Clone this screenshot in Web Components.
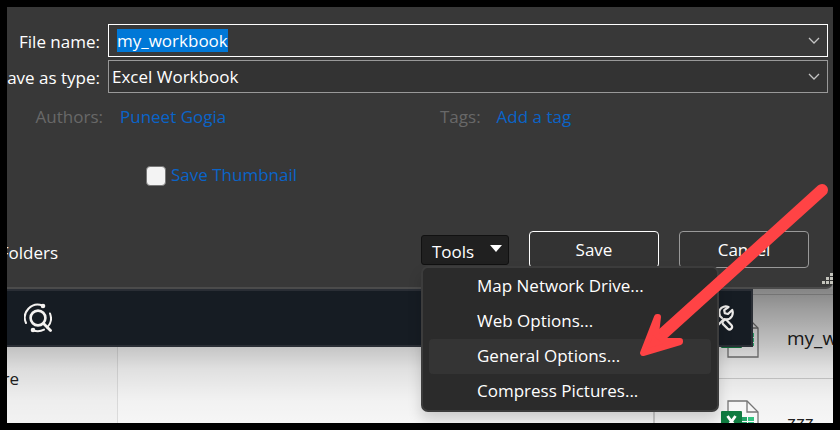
<!DOCTYPE html>
<html lang="en">
<head>
<meta charset="utf-8">
<title>Save As</title>
<style>
html { height: 100%; }
body { margin: 0; min-height: 100%; display: flex; background: #000; font-family: "Open Sans", "Noto Sans", sans-serif; font-size: 17px; line-height: 24px; color: #fff; }
</style>
</head>
<body>
<desktop-frame>
  <save-dialog slot="dialog"></save-dialog>
  <dark-toolbar slot="toolbar"></dark-toolbar>
  <file-explorer slot="explorer">
    <file-row name="my_workbook"></file-row>
    <file-row name="zzz"></file-row>
  </file-explorer>
  <pointer-arrow slot="overlay"></pointer-arrow>
</desktop-frame>
<script>
const define = (tag, html, setup) => customElements.define(tag, class extends HTMLElement {
  constructor() {
    super();
    const t = document.createElement('template');
    t.innerHTML = html;
    this.attachShadow({ mode: 'open' }).append(t.content.cloneNode(true));
  }
  connectedCallback() { if (setup) setup(this, this.shadowRoot); }
});

define('desktop-frame', `
<style>
:host { flex: 1; display: flex; box-sizing: border-box; border: 7px solid #000; min-width: 0; }
.stage { position: relative; flex: 1; min-width: 0; display: flex; flex-direction: column; overflow: hidden; background: #8c8c8c; }
.top { position: relative; z-index: 3; }
.lower { position: relative; z-index: 1; flex: 1 1 0; min-height: 0; display: flex; }
.shade { position: absolute; inset: 0; z-index: 1; pointer-events: none; background: linear-gradient(rgba(0,0,0,.46), rgba(0,0,0,.36) 20px, rgba(0,0,0,.2) 58px, rgba(0,0,0,.09) 80px, rgba(0,0,0,.02) 110px, transparent 134px); }
.bar { position: absolute; top: 0; left: 0; right: 80px; z-index: 2; }
.over { position: absolute; top: 169px; right: 0; z-index: 5; pointer-events: none; }
</style>
<div class="stage">
  <div class="top"><slot name="dialog"></slot></div>
  <div class="lower"><slot name="explorer"></slot><div class="shade"></div><div class="bar"><slot name="toolbar"></slot></div></div>
  <div class="over"><slot name="overlay"></slot></div>
</div>`);

define('combo-field', `
<style>
:host { display: flex; align-items: center; box-sizing: border-box; height: 33px; border: 1px solid #999; background: #333; position: relative; min-width: 0; }
:host([active]) { border-color: #fff; background: #383838; }
::slotted(input), ::slotted(select) { flex: 1; min-width: 0; height: 31px; box-sizing: border-box; appearance: none; border: 0; outline: 0; background: transparent; color: #fff; font: inherit; padding: 0 28px 0 3px; margin: 0; }
::slotted(input) { padding-left: 8px; }
svg { position: absolute; right: 7px; top: 12px; pointer-events: none; }
</style>
<slot></slot>
<svg width="12" height="8" viewBox="0 0 12 8" fill="none" stroke="#c4c4c4" stroke-width="1.3"><path d="M1 1l5 5 5-5"/></svg>`);

define('push-button', `
<style>
:host { display: block; }
button { display: block; box-sizing: border-box; width: 130px; height: 37px; border: 1px solid #999; border-radius: 4px; background: #333; color: #fff; font: inherit; padding: 0; }
:host([primary]) button { border-color: #fff; }
</style>
<button type="button"><slot></slot></button>`);

define('tools-menu', `
<style>
:host { display: block; position: relative; align-self: center; }
.trigger { display: flex; align-items: center; justify-content: space-between; box-sizing: border-box; width: 88px; height: 30px; border: 1px solid #111; border-radius: 3px; background: #202020; color: #fff; font: inherit; padding: 4px 6px 0 10px; }
.trigger svg { margin-bottom: 6px; }
.menu { position: absolute; left: 0; top: 31px; width: 298px; box-sizing: border-box; border: 2px solid #3c3c3c; border-radius: 7px; background: #2b2b2b; padding: 1px 6px; box-shadow: 0 8px 14px rgba(0,0,0,.16); }
.menu button { display: block; box-sizing: border-box; width: 100%; height: 35px; border: 0; border-radius: 4px; background: transparent; color: #fff; font: inherit; text-align: left; padding: 0 0 0 48px; }
.menu button.hot { background: #343434; }
</style>
<button class="trigger" type="button" aria-haspopup="menu" aria-expanded="true">Tools<svg width="12" height="7" viewBox="0 0 12 7"><path d="M0 0h12L6 7z" fill="#fff"/></svg></button>
<div class="menu" role="menu">
  <button role="menuitem">Map Network Drive...</button>
  <button role="menuitem">Web Options...</button>
  <button role="menuitem" class="hot">General Options...</button>
  <button role="menuitem">Compress Pictures...</button>
</div>`);

define('save-dialog', `
<style>
:host { display: flex; flex-direction: column; background: #383838; border-bottom: 2px solid #4b4b4b; border-bottom-right-radius: 7px; padding-top: 17px; position: relative; }
.fields { display: grid; grid-template-columns: 93px 1fr; column-gap: 8px; row-gap: 3px; padding-right: 5px; align-items: center; }
.fields label { white-space: nowrap; display: flex; justify-content: flex-end; padding-top: 2px; }
input::selection { background: #0078d7; color: #fff; }
.meta { display: grid; grid-template-columns: 96px 303px 1fr; column-gap: 17px; padding-top: 12px; }
.meta .who { text-align: right; }
.k { color: #686868; }
a { color: #0a64c8; text-decoration: none; }
.tags { display: flex; gap: 16px; }
.thumb { display: flex; align-items: center; gap: 5px; color: #0a64c8; padding: 34px 0 0 139px; }
.thumb input { appearance: none; box-sizing: border-box; width: 20px; height: 20px; margin: 2px 0 0; border: 1px solid #777; border-radius: 4px; background: #f3f3f3; }
.foot { display: flex; gap: 20px; align-items: center; padding: 44px 24px 19px 0; }
.folders { width: 51px; display: flex; justify-content: flex-end; margin-right: auto; padding-top: 6px; }
.folders button { border: 0; background: none; color: #fff; font: inherit; padding: 0; }
.grip { position: absolute; right: 0; bottom: 3px; }
</style>
<div class="fields">
  <label for="name">File name:</label>
  <combo-field active><input id="name" type="text" value="my_workbook" spellcheck="false"></combo-field>
  <label for="type">ave as type:</label>
  <combo-field><select id="type"><option>Excel Workbook</option></select></combo-field>
</div>
<div class="meta">
  <span class="k who">Authors:</span><a href="#authors">Puneet Gogia</a>
  <span class="tags"><span class="k">Tags:</span><a href="#tags">Add a tag</a></span>
</div>
<div class="thumb"><input id="thumb" type="checkbox"><label for="thumb">Save Thumbnail</label></div>
<div class="foot">
  <div class="folders"><button type="button">Folders</button></div>
  <tools-menu></tools-menu>
  <push-button primary>Save</push-button>
  <push-button>Cancel</push-button>
</div>
<svg class="grip" width="11" height="11" viewBox="0 0 11 11" fill="#c4c4bc"><path d="M8 0h3v3H8zM4 4h3v3H4zM8 4h3v3H8zM0 8h3v3H0zM4 8h3v3H4zM8 8h3v3H8z"/></svg>`,
(el, root) => {
  const name = root.getElementById('name');
  name.focus({ preventScroll: true });
  name.select();
});

define('dark-toolbar', `
<style>
:host { display: flex; align-items: center; justify-content: space-between; box-sizing: border-box; height: 58px; padding: 0 17px; border: 2px solid #2a2e35; border-left: 0; background: #161c23; }
svg { display: block; }
</style>
<svg width="28" height="30" viewBox="0 0 28 30" fill="none" stroke="#f4f2f0" stroke-width="2" stroke-linecap="round">
<circle cx="14" cy="15" r="7.4" stroke-width="2.6"/><path d="M19.500 20.500l7 7" stroke-width="2.800"/>
<path d="M2 20A13 13 0 0 1 18.500 2.500M26 10.500A13 13 0 0 1 23 24.500M20 26.600A13 13 0 0 1 9 27.200"/>
<circle cx="19" cy="3" r="2.300" fill="#f4f2f0" stroke="none"/><circle cx="9" cy="27" r="2.300" fill="#f4f2f0" stroke="none"/></svg>
<svg width="26" height="26" viewBox="0 0 26 26" fill="none" stroke="#eeecea" stroke-width="2.200" stroke-linejoin="round" stroke-linecap="round">
<path d="M20.500 2c-3-1.200-7-.5-8.600 2.800-.8 1.800-.6 3.500-.2 4.800L2 19.500c-1 1.300-1 3 .3 4.200 1.200 1.200 3 1.200 4.200 0L16 14c3.200 1 6.500-.2 8-3 1-2 1-4 .2-6l-4.200 4-3.200-.8-.6-3z"/>
<path d="M2 3l3-2 4 4v3l5 5M14.500 17l2-2.500 2 .5 4.800 5c1 1.200.9 2.700 0 3.600-1 1-2.600 1-3.700 0l-4.800-4.700z"/></svg>`);

define('file-explorer', `
<style>
:host { flex: 1; min-width: 0; display: grid; grid-template-columns: 111px 1fr 180px; background: #f6f6f6; color: #202020; }
.nav { border-right: 1px solid #dcdcdc; background: #f2f2f2; padding-top: 78px; }
.nav div { width: 12px; display: flex; justify-content: flex-end; }
.list { border-left: 2px solid #ccc; padding-top: 5px; min-height: 0; }
</style>
<div class="nav"><div>re</div></div><div></div><div class="list"><slot></slot></div>`);

define('file-row', `
<style>
:host { display: flex; align-items: center; gap: 28px; box-sizing: border-box; height: 84px; border-top: 1px solid #ccc; padding-left: 66px; font-size: 19px; line-height: 28px; white-space: nowrap; }
svg { flex: none; }
span { padding-top: 2px; }
</style>
<svg width="38" height="42" viewBox="0 0 38 42">
<path d="M7 1h19l11 11v29H7z" fill="#fafafa" stroke="#777" stroke-width="1.3"/><path d="M26 1v11h11" fill="none" stroke="#777" stroke-width="1.3"/>
<path d="M21 17h5v4h-5zM21 22h5v4h-5zM21 27h5v3h-5z" fill="#21a366"/><path d="M27 17h6v4h-6zM27 22h6v4h-6zM27 27h6v3h-6z" fill="#33c481"/>
<rect x="0" y="11" width="21" height="21" rx="1" fill="#107c41"/><path d="M6.500 16l8 11M14.500 16l-8 11" stroke="#fff" stroke-width="2.800"/></svg>
<span></span>`, (el, root) => { root.querySelector('span').textContent = el.getAttribute('name'); });

define('pointer-arrow', `
<style>:host { display: block; } svg { display: block; }</style>
<svg width="200" height="190" viewBox="633 176 200 190" fill="#ff4345" stroke="#ff4345" stroke-linecap="round" stroke-linejoin="round" role="img" aria-label="Arrow to General Options">
<path d="M822 190L656 340" stroke-width="12" fill="none"/><path d="M643 353L657 317L658 317L656 334L664 341L680 341L680 342Z" stroke-width="6"/></svg>`);
</script>
</body>
</html>
